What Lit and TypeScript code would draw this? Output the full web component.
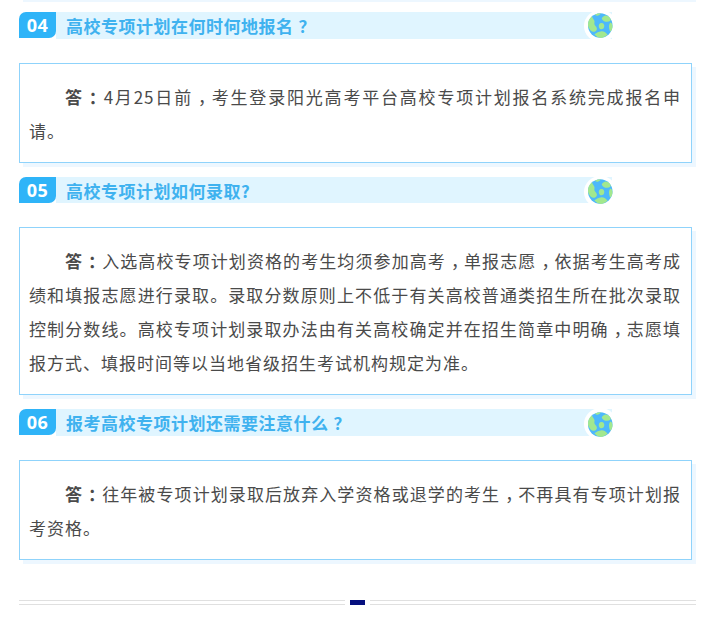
import { LitElement, html, css } from "lit";
import { customElement } from "lit/decorators.js";

const items = [
  {
    no: "04",
    q: "高校专项计划在何时何地报名？",
    a: "4月25日前，考生登录阳光高考平台高校专项计划报名系统完成报名申请。",
    high: true,
  },
  {
    no: "05",
    q: "高校专项计划如何录取?",
    a: "入选高校专项计划资格的考生均须参加高考，单报志愿，依据考生高考成绩和填报志愿进行录取。录取分数原则上不低于有关高校普通类招生所在批次录取控制分数线。高校专项计划录取办法由有关高校确定并在招生简章中明确，志愿填报方式、填报时间等以当地省级招生考试机构规定为准。",
    high: false,
  },
  {
    no: "06",
    q: "报考高校专项计划还需要注意什么？",
    a: "往年被专项计划录取后放弃入学资格或退学的考生，不再具有专项计划报考资格。",
    high: false,
  },
];

/* Full-width comma, colon and question mark sit in the middle of their cell in the reference. */
const punct = (text: string) =>
  text
    .split(/([，：？])/)
    .map((part) => (/^[，：？]$/.test(part) ? html`<span class="p">${part}</span>` : part));

const globe = html`<svg class="globe" viewBox="0 0 25 25" aria-hidden="true">
  <circle cx="12.5" cy="12.5" r="12.5" fill="#4db8fb"></circle>
  <g fill="#a2e88e">
    <path d="M4 3C5 6 7.500 7 6.500 10 6 12 8 13 9 15 9.500 18 7 19 5 19 2 18 0 14 0 12 0 8 1 6 4 3Z"></path>
    <path d="M14 5C16 2.500 18 1.500 20.500 3 22.500 4.500 24 6 22.500 8 20 9.500 14.500 8.500 14 5Z"></path>
    <path d="M13 10C16 9.500 17 12 16.500 14 16 16.500 12.500 17 11.500 15 10.500 13 11 10.500 13 10Z"></path>
    <path d="M6.500 21.500C9 19.500 11 18.500 13 18.500 16 18 18.500 20 20 22 15 26.500 10 26 6.500 21.500Z"></path>
    <path d="M23 9.500C24.500 10 25 12 25 14 24.500 17 23.500 18.500 22.500 18.500 21 15 21 11 23 9.500Z"></path>
    <path d="M7 1.500C9 .5 11 0 13 0 12 2 9.500 3.500 7 1.500Z"></path>
  </g>
</svg>`;

@customElement("app-root")
export class AppRoot extends LitElement {
  static styles = css`
    :host {
      display: block;
      width: 720px;
      height: 625px;
      background: #fff;
      overflow: hidden;
      font-family: "Noto Sans CJK SC", "Noto Sans", sans-serif;
    }
    .page {
      padding: 0 24px 0 19px;
      display: flex;
      flex-direction: column;
    }
    .strip {
      height: 2px;
      margin: 0 0 10px 4px;
      background: #edf7ff;
      width: 673px;
    }
    .head {
      display: flex;
      align-items: stretch;
      height: 26.500px;
      position: relative;
      width: 593px;
    }
    .no {
      width: 37px;
      height: 26px;
      flex: none;
      background: #2fb4f8;
      color: #fff;
      font-family: "Open Sans", sans-serif;
      font-weight: 700;
      font-size: 18px;
      letter-spacing: 0.500px;
      line-height: 26px;
      text-align: center;
      border-radius: 7px 0 7px 0;
    }
    .title {
      flex: 1;
      background: #e0f5ff;
      color: #3fb2ef;
      font-size: 17px;
      letter-spacing: 0.500px;
      font-weight: 700;
      line-height: 27px;
      padding-left: 10px;
      white-space: nowrap;
    }
    .ring {
      position: absolute;
      left: 565px;
      top: -1px;
      width: 24.500px;
      height: 25px;
      padding: 3.500px 4px;
      border-radius: 50%;
      background: #fff;
    }
    .ring.high {
      top: -2.500px;
    }
    .globe {
      display: block;
      width: 24.500px;
      height: 25px;
    }
    .box {
      box-sizing: border-box;
      width: 673px;
      margin-top: 24px;
      margin-bottom: 14px;
      padding: 16px 10px 14px 9px;
      border: 1px solid #8fd3fb;
      background: #fff;
      box-shadow: 4px 4px 0 #edf7ff;
      color: #4a4a4a;
      font-size: 17px;
      letter-spacing: 1px;
      line-height: 34px;
      text-align: justify;
      text-indent: 36px;
    }
    .box b {
      font-weight: 700;
      margin-right: 1px;
    }
    .p {
      margin-left: 5px;
      letter-spacing: -4px;
    }
    .title .p {
      letter-spacing: -4.500px;
    }
    .rule {
      display: flex;
      height: 5px;
      margin-top: 26.500px;
      width: 677px;
    }
    .line {
      flex: 1;
      box-sizing: border-box;
      height: 5px;
      border-top: 1px solid #e0e0e0;
      border-bottom: 1px solid #e0e0e0;
    }
    .line.first {
      flex: 0 0 326px;
    }
    .mark {
      flex: none;
      width: 15px;
      margin: 0 5px;
      background: #06107f;
    }
  `;

  render() {
    return html`<div class="page">
      <div class="strip"></div>
      ${items.map(
        (i) => html`<div class="head">
            <div class="no">${i.no}</div>
            <div class="title">${punct(i.q)}</div>
            <div class="ring ${i.high ? "high" : ""}">${globe}</div>
          </div>
          <div class="box"><b>答<span class="p">：</span></b>${punct(i.a)}</div>`
      )}
      <div class="rule">
        <div class="line first"></div>
        <div class="mark"></div>
        <div class="line"></div>
      </div>
    </div>`;
  }
}
